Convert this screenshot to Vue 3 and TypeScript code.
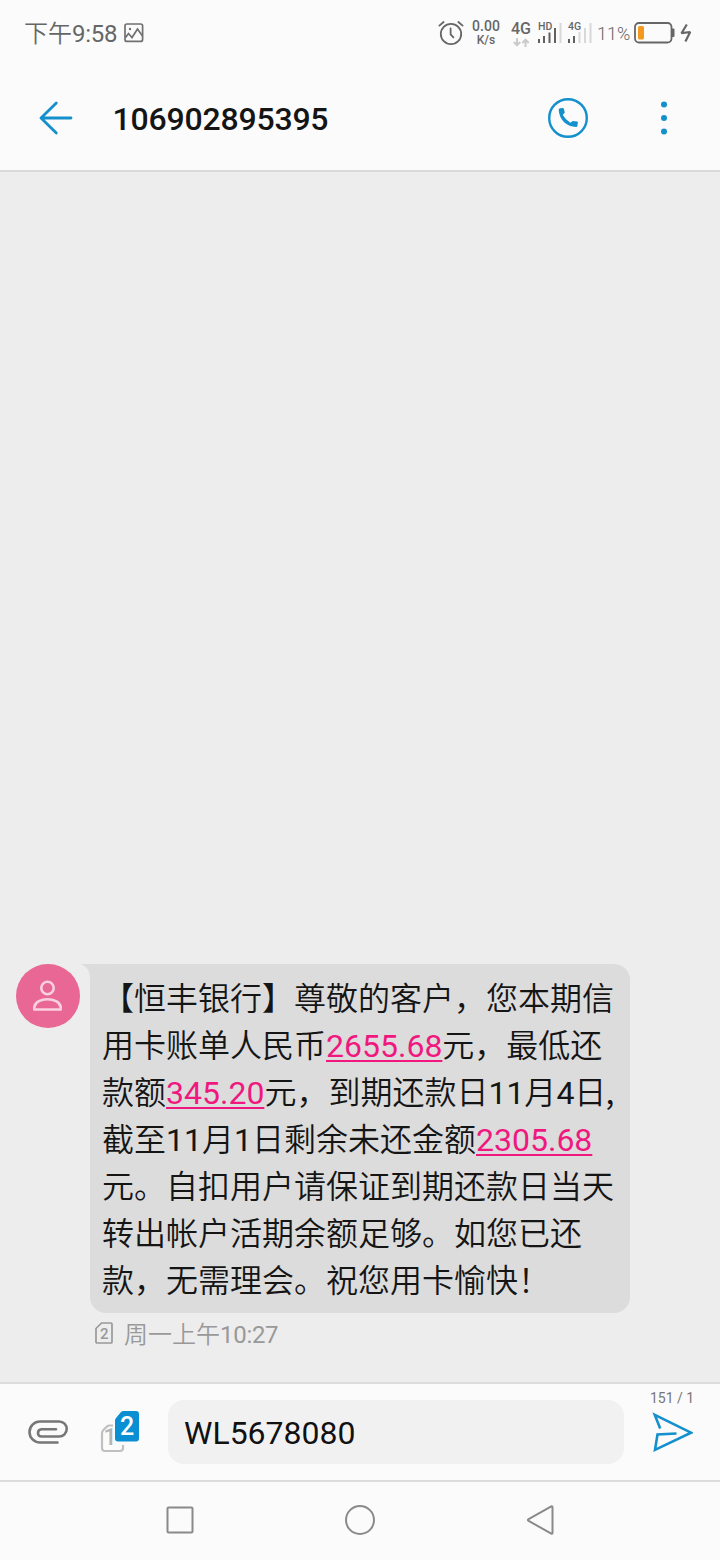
<script setup lang="ts">
import { ref } from 'vue'

interface Segment {
  text: string
  kind: 'han' | 'latin' | 'amount' | 'comma'
}

const sender = '106902895395'
const draft = ref('WL5678080')
const body = [
  '【恒丰银行】尊敬的客户，您本期信',
  '用卡账单人民币2655.68元，最低还',
  '款额345.20元，到期还款日11月4日,',
  '截至11月1日剩余未还金额2305.68',
  '元。自扣用户请保证到期还款日当天',
  '转出帐户活期余额足够。如您已还',
  '款，无需理会。祝您用卡愉快！',
]

function kindOf(text: string): Segment['kind'] {
  if (text === ',') return 'comma'
  if (/^\d+\.\d+$/.test(text)) return 'amount'
  return /^\d/.test(text) ? 'latin' : 'han'
}
function split(line: string): Segment[] {
  return line
    .split(/([\d.]+|,)/)
    .filter(Boolean)
    .map((text) => ({ text, kind: kindOf(text) }))
}
const lines = body.map(split)
</script>

<template>
  <div class="phone">
    <div class="status">
      <span class="clock"><span class="han">下午</span>9:58</span>
      <svg class="shot" width="20" height="20" viewBox="0 0 20 20" fill="none" stroke="#707070" stroke-width="1.7">
        <rect x="1" y="1" width="17.6" height="17.4" rx="2" />
        <path d="M1.5 14.5 4.5 10.5 8 14.5 13.5 6 18.5 13" />
        <circle cx="6" cy="6" r="1.2" fill="#707070" stroke="none" />
      </svg>
      <div class="right">
        <svg class="alarm" width="26" height="26" viewBox="0 0 26 26" fill="none" stroke="#666" stroke-width="1.8" stroke-linecap="round">
          <circle cx="13" cy="14" r="10.2" />
          <path d="M12.6 8.5v5.8l2.8 3M1.4 5.6 5.6 2M24.6 5.6 20.4 2" />
        </svg>
        <div class="speed"><span>0.00</span><span class="unit">K/s</span></div>
        <div class="net">
          <span>4G</span>
          <svg width="16" height="9" viewBox="0 0 16 9" fill="none" stroke="#cacaca" stroke-width="2">
            <path d="M4 0v7M.8 4 4 7.4 7.2 4M12.5 9V2M9.3 5l3.2-3.4L15.7 5" />
          </svg>
        </div>
        <div class="signal">
          <span>HD</span>
          <svg width="25" height="22" viewBox="0 0 25 22" stroke-width="2">
            <path stroke="#606060" d="M2 17v4M7 14v7M12.5 10.5v10.5M18 6v15" />
            <path stroke="#d8d8d8" d="M23.5 1v20" />
          </svg>
        </div>
        <div class="signal">
          <span>4G</span>
          <svg width="25" height="22" viewBox="0 0 25 22" stroke-width="2">
            <path stroke="#606060" d="M2 17v4M7 14v7" />
            <path stroke="#d8d8d8" d="M12.5 10v11M18 6v15M23.5 1v20" />
          </svg>
        </div>
        <span class="percent">11%</span>
        <svg class="battery" width="41" height="22" viewBox="0 0 41 22">
          <rect x="1" y="1" width="36.5" height="19.5" rx="4" fill="none" stroke="#666" stroke-width="1.8" />
          <path d="M38 6.5h1.5q1 0 1 1v6.5q0 1-1 1H38z" fill="#666" />
          <rect x="4" y="4" width="6" height="13.5" rx="1.5" fill="#f39a1e" />
        </svg>
        <svg class="bolt" width="12" height="20" viewBox="0 0 12 20" fill="none" stroke="#666" stroke-width="2.2" stroke-linejoin="bevel">
          <path d="M6.8 1.5 1.5 10.2 10.2 9 5.4 18.5" />
        </svg>
      </div>
    </div>

    <header class="header">
      <svg class="back" width="34" height="34" viewBox="0 0 34 34" fill="none" stroke="#1490cc" stroke-width="2.8" stroke-linecap="round" stroke-linejoin="round">
        <path d="M17.3 2 2 17l15.3 15M2 17h30" />
      </svg>
      <h1>{{ sender }}</h1>
      <svg class="call" width="40" height="40" viewBox="0 0 40 40">
        <circle cx="20" cy="20" r="18.8" fill="none" stroke="#1490cc" stroke-width="2.4" />
        <path fill="#1490cc" d="M12.2 10.2l2.6-.2q.8 0 1 .8l1 3.8-2 2.5q2.6 4.8 7.6 7.6l2.4-1.7 4.2.4q1 .1.9 1l-.5 3.6q-.2.9-1.2.9Q21 28.6 16.4 24.5 11 19 10.7 12q-.1-1.6 1.5-1.8z" />
      </svg>
      <svg class="more" width="8" height="34" viewBox="0 0 8 34" fill="#1490cc">
        <circle cx="4" cy="3.5" r="3" /><circle cx="4" cy="17" r="3" /><circle cx="4" cy="30.5" r="3" />
      </svg>
    </header>

    <main class="thread">
      <div class="message">
        <div class="avatar">
          <svg width="30" height="32" viewBox="0 0 30 32" fill="none" stroke="#fad0de" stroke-width="2.6">
            <circle cx="14.5" cy="8" r="6.2" />
            <path stroke-linejoin="round" d="M1.3 29.5v-2.5C2 21.8 8.500 19.2 14.5 19.2s12.5 2.6 13.2 7.8v2.5z" />
          </svg>
        </div>
        <div class="content">
          <div class="bubble">
            <svg class="tail" width="22" height="20" viewBox="0 0 22 20"><path fill="#dcdcdc" d="M0 0h22v20H9V14Q9 4 0 0z" /></svg>
            <p v-for="(line, i) in lines" :key="i"><span v-for="(s, j) in line" :key="j" :class="s.kind">{{ s.text }}</span></p>
          </div>
          <div class="meta">
            <svg width="18" height="22" viewBox="0 0 18 22">
              <path fill="none" stroke="#999" stroke-width="1.7" stroke-linejoin="round" d="M6.5 1H16q1 0 1 1v18q0 1-1 1H2q-1 0-1-1V6.5z" />
              <text x="9" y="16.5" text-anchor="middle">2</text>
            </svg>
            <span><span class="han">周一上午</span>10:27</span>
          </div>
        </div>
      </div>
    </main>

    <footer class="composer">
      <svg class="clip" width="40" height="24" viewBox="0 0 40 24" fill="none" stroke="#777" stroke-width="2.6" stroke-linecap="round">
        <path d="M29.5 22.5H12A10.5 10.5 0 0 1 12 1.5H31.2A7.5 7.5 0 0 1 31.2 16.5H13.5Q10 16.5 10 13T13.5 9.2H28" />
      </svg>
      <svg class="sims" width="40" height="42" viewBox="0 0 40 42">
        <path fill="none" stroke="#c0c0c0" stroke-width="2.2" d="M13 14.5H9.5Q8 14.5 7 15.5L3.2 19.2Q2 20.5 2 22V37q0 3 3 3H20q3 0 3-3v-3" />
        <text class="one" x="10" y="34" text-anchor="middle">1</text>
        <path fill="#0a8fd3" d="M23.5 0H36q3 0 3 3V27.5q0 3-3 3H18q-3 0-3-3V9.5Q15 8 16 7L21 1Q22 0 23.5 0z" />
        <text class="two" x="27" y="24" text-anchor="middle">2</text>
      </svg>
      <div class="field">{{ draft }}</div>
      <div class="sender">
        <span>151 / 1</span>
        <svg width="42" height="40" viewBox="0 0 42 40" fill="none" stroke="#1490cc" stroke-width="2.6" stroke-linejoin="miter">
          <path d="M9.2 16.5 3.8 2.9 40 20.7 4 37.8 6.5 22.5 25.5 21.5" />
        </svg>
      </div>
    </footer>

    <nav class="nav">
      <svg width="32" height="32" viewBox="0 0 32 32"><rect x="3.5" y="3.5" width="25" height="25" rx="1" /></svg>
      <svg width="32" height="32" viewBox="0 0 32 32"><circle cx="16" cy="16" r="14" /></svg>
      <svg width="32" height="32" viewBox="0 0 32 32"><path stroke-linejoin="round" d="M28.5 3v26a.8.8 0 0 1-1.2.7L4.2 16.6a.8.8 0 0 1 0-1.2L27.3 2.3a.8.8 0 0 1 1.2.7z" /></svg>
    </nav>
  </div>
</template>

<style>
body { margin: 0; background: #fafafa; }
</style>

<style scoped>
.phone {
  width: 720px;
  height: 1560px;
  display: flex;
  flex-direction: column;
  overflow: hidden;
  background: #fbfbfb;
  font-family: Roboto, "Noto Sans CJK SC", sans-serif;
}
svg { display: block; flex: none; }
.han { font-weight: 350; letter-spacing: 0; }
.comma { margin-left: -1px; line-height: 0; font-family: "Noto Sans CJK SC", sans-serif; }
.status {
  height: 66px;
  display: flex;
  align-items: center;
  box-sizing: border-box;
  padding: 0 28px 0 24px;
  color: #666;
  white-space: nowrap;
}
.clock { font-size: 24px; line-height: 34px; padding-top: 1px; letter-spacing: -0.3px; }
.shot { margin-left: 7px; }
.right { margin-left: auto; display: flex; align-items: center; }
.alarm { margin-right: 7px; }
.speed {
  width: 30px;
  display: flex;
  flex-direction: column;
  align-items: center;
  font-size: 14px;
  line-height: 14px;
  font-weight: 500;
}
.unit { font-size: 12px; }
.net {
  width: 22px;
  margin-left: 9px;
  display: flex;
  flex-direction: column;
  align-items: center;
  font-size: 16px;
  line-height: 18px;
  font-weight: 500;
}
.signal { position: relative; margin-left: 5px; width: 25px; }
.signal span {
  position: absolute;
  left: 1px;
  top: -1px;
  font-size: 10.5px;
  line-height: 12px;
  font-weight: 500;
}
.percent { margin-left: 5px; font-size: 18px; font-weight: 300; width: 33px; }
.battery { margin-left: 4px; }
.bolt { margin-left: 5px; }
.header {
  height: 106px;
  box-sizing: border-box;
  padding: 0 52px 0 39px;
  display: flex;
  align-items: center;
  border-bottom: 2px solid #dadada;
}
h1 {
  margin: 0 0 0 39.5px;
  padding-top: 1px;
  font-size: 32px;
  line-height: 38px;
  font-weight: 500;
  letter-spacing: -0.2px;
  color: #151515;
}
.call { margin-left: auto; }
.more { margin-left: 72px; }
.thread {
  flex: 1;
  display: flex;
  flex-direction: column;
  justify-content: flex-end;
  background: #ededed;
  padding: 0 16px 30px;
}
.message { display: flex; align-items: flex-start; }
.avatar {
  width: 64px;
  height: 64px;
  border-radius: 50%;
  background: #e86794;
  display: flex;
  align-items: center;
  justify-content: center;
}
.content { margin-left: 10px; }
.bubble {
  position: relative;
  width: 540px;
  height: 349px;
  box-sizing: border-box;
  padding: 12px 12px 8px;
  border-radius: 16px;
  background: #dcdcdc;
}
.tail { position: absolute; left: -9px; top: 0; }
.bubble p {
  margin: 0;
  height: 47px;
  font-size: 32px;
  line-height: 47px;
  color: #151515;
  white-space: nowrap;
}
.amount {
  color: #f0187f;
  text-decoration: underline;
  text-decoration-thickness: 2px;
  text-underline-offset: 3px;
}
.meta {
  height: 39px;
  margin-left: 5px;
  display: flex;
  align-items: center;
  gap: 11px;
  font-size: 24px;
  line-height: 36px;
  letter-spacing: -0.3px;
  color: #999;
}
.meta > span { padding-top: 4px; }
.meta text { font-size: 15px; fill: #999; font-weight: 500; }
.composer {
  height: 100px;
  box-sizing: border-box;
  border-top: 2px solid #dcdcdc;
  border-bottom: 2px solid #dcdcdc;
  display: flex;
  align-items: center;
  padding-left: 28px;
}
.sims { margin-left: 32px; }
.one { font-size: 23px; font-weight: 500; fill: #b6b6b6; }
.two { font-size: 25px; font-weight: 500; fill: #fff; }
.field {
  margin-left: 28px;
  width: 456px;
  height: 64px;
  box-sizing: border-box;
  padding-left: 16px;
  border-radius: 16px;
  background: #f1f1f1;
  font-size: 32px;
  line-height: 66px;
  color: #111;
}
.sender {
  width: 44px;
  height: 96px;
  margin-left: 26px;
  display: flex;
  flex-direction: column;
  align-items: center;
  color: #777;
  white-space: nowrap;
}
.sender span { margin-top: 6px; font-size: 14px; line-height: 16px; }
.sender svg { margin-top: 6px; }
.nav {
  height: 78px;
  box-sizing: border-box;
  padding-bottom: 2px;
  display: flex;
  justify-content: center;
  align-items: center;
  gap: 148px;
}
.nav svg { fill: none; stroke: #8a8a8a; stroke-width: 2; }
</style>
